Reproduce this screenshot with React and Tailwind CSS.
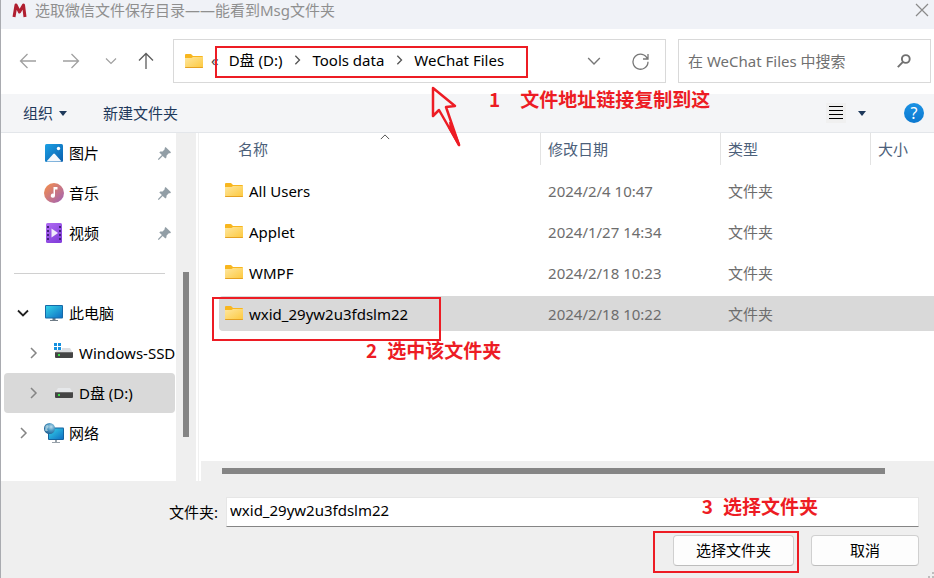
import React from "react";

const files = [
  { name: "All Users", date: "2024/2/4 10:47", type: "文件夹" },
  { name: "Applet", date: "2024/1/27 14:34", type: "文件夹" },
  { name: "WMPF", date: "2024/2/18 10:23", type: "文件夹" },
  { name: "wxid_29yw2u3fdslm22", date: "2024/2/18 10:22", type: "文件夹", selected: true },
];

const crumbs = ["D盘 (D:)", "Tools data", "WeChat Files"];

function Chevron({ dir = "down", className = "", size = 12, width = 1.2 }) {
  const d = {
    down: "M1 3.5 6 8.5 11 3.5",
    right: "M4 1 9 6 4 11",
    up: "M1 8.5 6 3.5 11 8.5",
  }[dir];
  return (
    <svg width={size} height={size} viewBox="0 0 12 12" fill="none" stroke="currentColor" strokeWidth={width} className={`shrink-0 ${className}`} aria-hidden="true">
      <path d={d} />
    </svg>
  );
}

function Arrow({ dir }) {
  const d = {
    left: "M17 9H1.5M8.5 2 1.5 9l7 7",
    right: "M1 9h15.500M9.500 2l7 7-7 7",
    up: "M9 17V1.500M2 8.500l7-7 7 7",
  }[dir];
  return (
    <svg width="18" height="18" viewBox="0 0 18 18" fill="none" stroke="currentColor" strokeWidth="1.3" aria-hidden="true">
      <path d={d} />
    </svg>
  );
}

function Folder() {
  return (
    <svg width="18" height="15" viewBox="0 0 18 15" className="shrink-0" aria-hidden="true">
      <defs>
        <linearGradient id="folder" x1="0" y1="0" x2="1" y2="1">
          <stop offset="0" stopColor="#fee7a0" />
          <stop offset="1" stopColor="#fdc83c" />
        </linearGradient>
      </defs>
      <path d="M0 1a1 1 0 0 1 1-1h5l2 2h9a1 1 0 0 1 1 1v3H0z" fill="#f8b61e" />
      <path d="M0 4h6.500L8 3H18v10a1 1 0 0 1-1 1H1a1 1 0 0 1-1-1z" fill="url(#folder)" />
      <path d="M0 13h18c0 .6-.4 1-1 1H1c-.6 0-1-.4-1-1z" fill="#e5a122" />
    </svg>
  );
}

function Pin() {
  return (
    <svg width="13" height="13" viewBox="0 0 13 13" className="shrink-0" aria-hidden="true">
      <path d="M7.600 0 13 5.200 12.200 6.200 10.800 6.200 8.600 8.400 8.400 10.600 7.400 11.600 4.700 8.900 1 12.800 0 12.800 0 12 3.900 8.100 1.300 5.500 2.300 4.500 4.600 4.400 6.700 2.300 6.700 1z" fill="#929ea6" />
    </svg>
  );
}

function PictureIcon() {
  return (
    <svg width="20" height="20" viewBox="0 0 20 20" aria-hidden="true">
      <defs>
        <linearGradient id="pic" x1="0" y1="0" x2="1" y2="1">
          <stop offset="0" stopColor="#1ba0e4" />
          <stop offset="1" stopColor="#0b5fae" />
        </linearGradient>
      </defs>
      <rect x="1" y="1" width="18" height="18" rx="1.500" fill="url(#pic)" />
      <path d="M2.500 18.500 9.200 11a1.200 1.200 0 0 1 1.700 0l6.700 7.500z" fill="#f4f8fc" />
      <circle cx="14.500" cy="5.500" r="1.700" fill="#fff" />
    </svg>
  );
}

function MusicIcon() {
  return (
    <svg width="20" height="20" viewBox="0 0 20 20" aria-hidden="true">
      <defs>
        <linearGradient id="mus" x1="0" y1="0" x2="1" y2="1">
          <stop offset="0.100" stopColor="#ef8b52" />
          <stop offset="0.900" stopColor="#a765ae" />
        </linearGradient>
      </defs>
      <circle cx="10" cy="10" r="10" fill="url(#mus)" />
      <path d="M9.500 4h4v2.500H11v6.200a2.100 2.100 0 1 1-1.500-2z" fill="#fff" />
    </svg>
  );
}

function VideoIcon() {
  return (
    <svg width="20" height="20" viewBox="0 0 20 20" aria-hidden="true">
      <defs>
        <linearGradient id="vid" x1="0" y1="0" x2="0.600" y2="1">
          <stop offset="0" stopColor="#b06cf2" />
          <stop offset="1" stopColor="#8540dc" />
        </linearGradient>
      </defs>
      <rect x="2" width="16" height="20" rx="1.500" fill="url(#vid)" />
      {[3, 7, 11, 15].map((y) => (
        <g key={y} fill="#43217c">
          <rect x="3" y={y} width="2" height="2" />
          <rect x="15" y={y} width="2" height="2" />
        </g>
      ))}
      <path d="M7.500 5.500 14 10l-6.500 4.500z" fill="#f1eafb" />
    </svg>
  );
}

function ScreenGradient({ id }) {
  return (
    <linearGradient id={id} x1="0" y1="0" x2="1" y2="1">
      <stop offset="0" stopColor="#35d3e8" />
      <stop offset="1" stopColor="#0f70c4" />
    </linearGradient>
  );
}

function ComputerIcon() {
  return (
    <svg width="20" height="20" viewBox="0 0 20 20" aria-hidden="true">
      <defs><ScreenGradient id="scr" /></defs>
      <path d="M8.500 15h3v2h2.500v1H6v-1h2.500z" fill="#6e7b86" />
      <rect x="1" y="2" width="18" height="13.500" rx="1" fill="#1669a8" />
      <rect x="2" y="3" width="16" height="11.500" fill="url(#scr)" />
    </svg>
  );
}

function NetworkIcon() {
  return (
    <svg width="20" height="20" viewBox="0 0 20 20" aria-hidden="true">
      <defs>
        <ScreenGradient id="net" />
        <radialGradient id="globe" cx="0.650" cy="0.350" r="0.700">
          <stop offset="0" stopColor="#b9dcec" />
          <stop offset="0.500" stopColor="#4c97c2" />
          <stop offset="1" stopColor="#1d5f92" />
        </radialGradient>
      </defs>
      <path d="M11 16.500h2V19h3v1H8v-1h3z" fill="#98a2aa" />
      <rect x="4" y="4.500" width="16" height="12.500" rx="1" fill="#14639f" />
      <rect x="5" y="5.500" width="14" height="10.500" fill="url(#net)" />
      <circle cx="5.500" cy="5.500" r="5.500" fill="url(#globe)" />
      <path d="M1.500 3c2-2 3.500-.5 3 1S2.500 5.500 3.500 7 2 8.500 1 7.500z" fill="#bfe0ea" opacity="0.700" />
    </svg>
  );
}

function DriveIcon({ windows }) {
  return (
    <svg width="20" height="20" viewBox="0 0 20 20" aria-hidden="true">
      <path d="M4 5h12l3 5H1z" fill={windows ? "#dcdee1" : "#e6e8ea"} />
      <rect x="1" y="9" width="18" height="6" rx="1" fill="#454545" />
      <rect x="1" y="9" width="18" height="1" fill="#6d6d6d" />
      <rect x="4" y="11" width="2" height="2" fill="#3be04a" />
      {windows && (
        <g>
          <rect x="0" y="-1" width="8" height="8" fill="#fff" />
          <rect x="0" y="0" width="3" height="3" fill="#1490df" />
          <rect x="4" y="0" width="3" height="3" fill="#1490df" />
          <rect x="0" y="4" width="3" height="3" fill="#1490df" />
          <rect x="4" y="4" width="3" height="3" fill="#1490df" />
        </g>
      )}
    </svg>
  );
}

function QuickItem({ icon, label }) {
  return (
    <li>
      <button type="button" className="flex h-10 w-full items-center gap-1 pr-[5px] pl-[43px] text-left">
        {icon}
        <span className="grow pl-[1px]">{label}</span>
        <Pin />
      </button>
    </li>
  );
}

function TreeItem({ icon, label, open, nested, selected }) {
  return (
    <li className="pr-[1px] pl-[3px]">
      <button
        type="button"
        aria-expanded={!!open}
        className={`flex h-10 w-full items-center gap-[15px] overflow-hidden rounded-sm text-left ${nested ? "pl-[23px]" : "pl-[13px]"} ${selected ? "bg-[#d9d9d9]" : ""}`}
      >
        <Chevron dir={open ? "down" : "right"} width={open ? 1.8 : 1.5} className={open ? "text-[#222]" : "text-[#858585]"} />
        <span className="flex min-w-0 items-center gap-[5px]">
          <span className="shrink-0">{icon}</span>
          <span className="whitespace-nowrap">{label}</span>
        </span>
      </button>
    </li>
  );
}

function Note({ n, children, className }) {
  return (
    <p className={`pointer-events-none absolute flex font-['Noto_Sans_CJK_SC',sans-serif] text-[19px] leading-6 font-bold whitespace-nowrap text-[#ed1c24] ${className}`}>
      <span>{n}</span>
      <span>{children}</span>
    </p>
  );
}

export default function App() {
  return (
    <main className="flex h-screen min-h-[480px] flex-col overflow-hidden border-l border-[#a9abb0] bg-[#efefef] font-['Noto_Sans','Noto_Sans_CJK_SC',sans-serif] text-[15px] leading-5 text-black">
      <header className="flex h-[29px] shrink-0 items-start justify-between bg-[#f0f2f7] pr-1 pl-[11px]">
        <h1 className="flex items-center gap-2 text-[#8f8f8f]">
          <svg width="15" height="15" viewBox="0 0 15 15" fill="none" stroke="#b01f30" strokeWidth="3" strokeLinejoin="round" aria-hidden="true">
            <path d="M2 14 4 2l3.500 7L11.500 2 13 14" />
          </svg>
          选取微信文件保存目录——能看到Msg文件夹
        </h1>
        <button type="button" aria-label="关闭" className="flex h-5 w-4 items-center justify-center text-[#8a8a8a]">
          <svg width="14" height="14" viewBox="0 0 14 14" stroke="currentColor" strokeWidth="1.200" aria-hidden="true">
            <path d="M1 1l12 12M13 1 1 13" />
          </svg>
        </button>
      </header>

      <div className="flex h-[65px] shrink-0 items-start gap-3 bg-white pt-[10px] pr-[3px] pl-[18px]">
        <div className="flex h-11 w-[142px] shrink-0 items-center gap-[25px]">
          <button type="button" aria-label="后退" className="text-[#a0a0a0]"><Arrow dir="left" /></button>
          <button type="button" aria-label="前进" className="text-[#a0a0a0]"><Arrow dir="right" /></button>
          <div className="flex items-center gap-5">
            <button type="button" aria-label="最近浏览的位置" className="text-[#a0a0a0]"><Chevron /></button>
            <button type="button" aria-label="向上" className="text-[#5c5c5c]"><Arrow dir="up" /></button>
          </div>
        </div>

        <div className="relative flex h-11 min-w-0 grow items-center border border-[#d9d9d9] pr-4 pl-[11px]">
          <Folder />
          <span className="pb-[2px] pl-2 text-[#444]">«</span>
          <nav aria-label="地址" className="flex grow items-center gap-[10px] pb-[2px] pl-[10px]">
            {crumbs.map((c, i) => (
              <React.Fragment key={c}>
                {i > 0 && <Chevron dir="right" size={10} width={1.6} className="text-[#555]" />}
                <button type="button" className="whitespace-nowrap">{c}</button>
              </React.Fragment>
            ))}
          </nav>
          <div className="flex items-center gap-[31px] text-[#777]">
            <button type="button" aria-label="以前的位置"><Chevron size={14} /></button>
            <button type="button" aria-label="刷新">
              <svg width="17" height="17" viewBox="0 0 17 17" fill="none" stroke="currentColor" strokeWidth="1.300" aria-hidden="true">
                <path d="M15.500 6A7.500 7.500 0 1 0 16 8.700M16 1v5h-5" />
              </svg>
            </button>
          </div>
          <div className="pointer-events-none absolute top-[6px] left-[41px] h-8 w-[313px] border-2 border-[#ed1c24]" />
          <svg width="32" height="64" viewBox="0 0 32 64" className="pointer-events-none absolute top-[46px] left-[256px] z-10" fill="none" stroke="#ed1c24" strokeWidth="2.500" strokeLinejoin="round" aria-hidden="true">
            <path d="M3 2 25 20 16 21 29 59 9 24 3 30z" />
            <path d="M20 36 29 59 19 41" fill="#ed1c24" />
          </svg>
          <Note n="1" className="top-[47px] left-[315px] z-10 gap-5">文件地址链接复制到这</Note>
        </div>

        <div className="flex h-11 w-[253px] shrink-0 items-center border border-[#d9d9d9] pr-[19px] pl-[9px]">
          <input type="search" aria-label="搜索" placeholder="在 WeChat Files 中搜索" className="min-w-0 grow bg-transparent outline-none placeholder:text-[#707070]" />
          <button type="button" aria-label="搜索" className="text-[#707070]">
            <svg width="14" height="14" viewBox="0 0 14 14" fill="none" stroke="currentColor" strokeWidth="1.900" aria-hidden="true">
              <circle cx="8.800" cy="5" r="3.900" />
              <path d="M6 7.800.800 13.200" />
            </svg>
          </button>
        </div>
      </div>

      <div className="flex h-[39px] shrink-0 items-center border-b border-[#e3e6ea] bg-[#f4f5f7] pr-[10px] pl-[22px] text-[#1e395b]">
        <button type="button" className="flex items-center gap-[6px]">
          组织
          <svg width="8" height="5" viewBox="0 0 8 5" fill="currentColor" aria-hidden="true"><path d="M0 0h8L4 5z" /></svg>
        </button>
        <button type="button" className="ml-9">新建文件夹</button>
        <div className="ml-auto flex items-center">
          <button type="button" aria-label="视图" className="flex h-5 w-5 items-center justify-center bg-[#f0f0f0] text-black">
            <svg width="14" height="14" viewBox="0 0 14 14" fill="currentColor" aria-hidden="true"><path d="M0 0h14v1H0zM0 4h14v1H0zM0 8h14v1H0zM0 12h14v1H0z" /></svg>
          </button>
          <button type="button" aria-label="更多选项" className="ml-3">
            <svg width="8" height="5" viewBox="0 0 8 5" fill="currentColor" aria-hidden="true"><path d="M0 0h8L4 5z" /></svg>
          </button>
          <button type="button" aria-label="帮助" className="ml-[38px] flex h-5 w-5 items-center justify-center rounded-full bg-linear-to-b from-[#1b92e4] to-[#0b78cf] text-[16px] text-white">?</button>
        </div>
      </div>

      <div className="flex min-h-0 grow">
        <nav aria-label="导航窗格" className="w-[175px] shrink-0 overflow-hidden bg-white">
          <ul>
            <QuickItem icon={<PictureIcon />} label="图片" />
            <QuickItem icon={<MusicIcon />} label="音乐" />
            <QuickItem icon={<VideoIcon />} label="视频" />
          </ul>
          <hr className="mt-5 mr-[11px] mb-[19px] ml-[13px] border-[#d0d0d0]" />
          <ul>
            <TreeItem open icon={<ComputerIcon />} label="此电脑" />
            <TreeItem nested icon={<DriveIcon windows />} label="Windows-SSD" />
            <TreeItem nested selected icon={<DriveIcon />} label="D盘 (D:)" />
            <TreeItem icon={<NetworkIcon />} label="网络" />
          </ul>
        </nav>
        <div className="flex w-5 shrink-0 justify-center pt-[139px] pb-11">
          <div className="w-[6px] bg-[#858585]" />
        </div>
        <div className="w-[5px] shrink-0 bg-white pl-[2px]"><div className="h-full w-[1px] bg-[#f0f0f0]" /></div>

        <section className="flex min-w-0 grow flex-col">
          <div className="relative grow bg-white pl-[18px]">
            <table className="w-full table-fixed border-collapse text-left">
              <colgroup>
                <col />
                <col className="w-[180px]" />
                <col className="w-[150px]" />
                <col className="w-[63px]" />
              </colgroup>
              <thead className="text-[#4c607a]">
                <tr className="h-[37px] align-top">
                  <th className="p-0 font-normal">
                    <div className="relative flex h-8 items-center border-r border-[#e3e3e3] pl-[19px]">
                      名称
                      <Chevron dir="up" size={10} className="absolute -top-[1px] left-1/2 text-[#555]" />
                    </div>
                  </th>
                  <th className="p-0 font-normal"><div className="flex h-8 items-center border-r border-[#e3e3e3] pl-[7px]">修改日期</div></th>
                  <th className="p-0 font-normal"><div className="flex h-8 items-center border-r border-[#e3e3e3] pl-[7px]">类型</div></th>
                  <th className="p-0 font-normal"><div className="flex h-8 items-center pl-[7px]">大小</div></th>
                </tr>
              </thead>
              <tbody className="text-[#6d6d6d]">
                {files.map((f) => {
                  const bg = f.selected ? "bg-[#d9d9d9]" : "";
                  return (
                    <tr key={f.name}>
                      <td className="px-0 py-[3px]">
                        <div className={`relative flex h-[35px] items-center gap-[6px] rounded-l-sm pl-[6px] text-black ${bg}`}>
                          <Folder />
                          {f.name}
                          {f.selected && (
                            <>
                              <div className="pointer-events-none absolute top-[1px] left-[-7px] h-11 w-[229px] border-2 border-[#ed1c24]" />
                              <Note n="2" className="top-[42px] left-[147px] gap-[10px]">选中该文件夹</Note>
                            </>
                          )}
                        </div>
                      </td>
                      <td className="px-0 py-[3px]"><div className={`flex h-[35px] items-center pl-[7px] ${bg}`}>{f.date}</div></td>
                      <td className="px-0 py-[3px]"><div className={`flex h-[35px] items-center pl-[7px] ${bg}`}>{f.type}</div></td>
                      <td className="px-0 py-[3px]"><div className={`h-[35px] ${bg}`} /></td>
                    </tr>
                  );
                })}
              </tbody>
            </table>
          </div>
          <div className="flex h-5 shrink-0 items-center pr-[49px] pl-[21px]">
            <div className="h-[6px] grow bg-[#858585]" />
          </div>
        </section>
      </div>

      <footer className="relative flex h-[97px] shrink-0 flex-col gap-2 pt-4 pr-[15px]">
        <div className="relative flex items-center gap-2 pl-[168px]">
          <label htmlFor="folder-name" className="whitespace-nowrap">文件夹:</label>
          <input id="folder-name" type="text" defaultValue="wxid_29yw2u3fdslm22" className="h-[30px] min-w-0 grow border border-[#e6e6e6] border-b-[#858585] bg-white px-[3px] pb-1 outline-none" />
          <Note n="3" className="top-[-3px] right-[101px] gap-[10px]">选择文件夹</Note>
        </div>
        <div className="flex justify-end gap-[17px]">
          <div className="relative">
            <button type="button" className="h-[31px] w-[121px] rounded-sm border border-[#d0d0d0] border-b-[#bdbdbd] bg-[#fdfdfd] pb-[1px]">选择文件夹</button>
            <div className="pointer-events-none absolute -top-1 left-[-20px] h-[42px] w-[146px] border-2 border-[#ed1c24]" />
          </div>
          <button type="button" className="h-[31px] w-[108px] rounded-sm border border-[#d0d0d0] border-b-[#bdbdbd] bg-[#fdfdfd] pb-[1px]">取消</button>
        </div>
        <svg width="6" height="6" viewBox="0 0 6 6" fill="#bdbdbd" className="absolute right-0 bottom-0" aria-hidden="true"><path d="M4 0h2v2H4zM0 4h2v2H0zM4 4h2v2H4z" /></svg>
      </footer>
    </main>
  );
}
